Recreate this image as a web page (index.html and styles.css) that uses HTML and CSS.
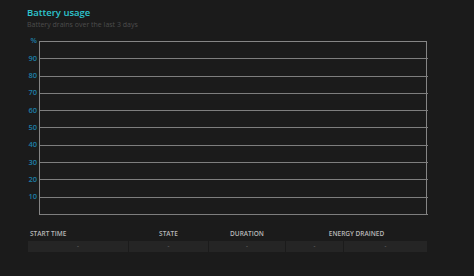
FILE: index.html
```html
<!DOCTYPE html>
<html>
<head>
<meta charset="utf-8">
<link rel="stylesheet" href="styles.css">
</head>
<body>
<div class="page">
  <h1 class="title">Battery usage</h1>
  <p class="subtitle">Battery drains over the last 3 days</p>
  <div class="chart">
    <div class="axis">
      <span>%</span><span>90</span><span>80</span><span>70</span><span>60</span><span>50</span><span>40</span><span>30</span><span>20</span><span>10</span><span></span>
    </div>
    <div class="plot">
      <div class="band"></div><div class="band"></div><div class="band"></div><div class="band"></div><div class="band"></div>
      <div class="band"></div><div class="band"></div><div class="band"></div><div class="band"></div><div class="band"></div>
    </div>
  </div>
  <div class="table">
    <div class="th left">START TIME</div>
    <div class="th">STATE</div>
    <div class="th">DURATION</div>
    <div class="th span2">ENERGY DRAINED</div>
    <div class="td">-</div>
    <div class="td">-</div>
    <div class="td">-</div>
    <div class="td">-</div>
    <div class="td">-</div>
  </div>
</div>
</body>
</html>
```
FILE: styles.css
```css
html, body {
  margin: 0;
  padding: 0;
  background: #1b1b1b;
  width: 474px;
  height: 276px;
  overflow: hidden;
  font-family: "Open Sans", "Noto Sans", sans-serif;
}
.page {
  padding: 6px 0 0 27px;
}
.title {
  margin: 0;
  font-size: 9.5px;
  line-height: 14px;
  font-weight: 600;
  color: #2ec6cf;
}
.subtitle {
  margin: 0;
  font-size: 7px;
  line-height: 10px;
  color: #4d4d4d;
}
.chart {
  display: flex;
  margin-top: 11px;
}
.axis {
  width: 10px;
  margin-top: -8.7px;
  margin-right: 2px;
  display: flex;
  flex-direction: column;
}
.axis span {
  height: 17.35px;
  line-height: 17.35px;
  text-align: right;
  font-size: 7.5px;
  font-weight: 600;
  color: #1d7ea6;
}
.plot {
  width: 386px;
  height: 173px;
  border: 1px solid #858585;
  border-bottom: none;
  display: flex;
  flex-direction: column;
}
.band {
  flex: 1;
  border-bottom: 1.5px solid #7e7e7e;
  margin-right: -2px;
}
.table {
  margin-top: 6px;
  margin-left: 1px;
  display: grid;
  grid-template-columns: 100px 79px 76px 57px 83px;
  column-gap: 1px;
}
.th {
  font-size: 6.5px;
  font-weight: 600;
  color: #b8b8b8;
  text-align: center;
  line-height: 10px;
  height: 12px;
}
.th.left {
  text-align: left;
  padding-left: 2px;
}
.th.span2 {
  grid-column: span 2;
}
.td {
  background: #252525;
  height: 11px;
  line-height: 11px;
  font-size: 6px;
  color: #8a8a8a;
  text-align: center;
}
```
